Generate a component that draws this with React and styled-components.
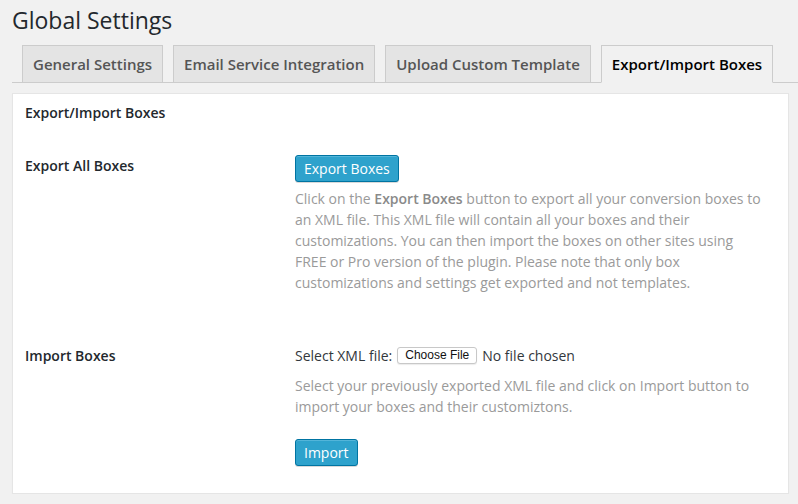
import React from 'react';
import styled, { createGlobalStyle } from 'styled-components';

const GlobalStyle = createGlobalStyle`
  body {
    margin: 0;
    background: #f1f1f1;
    font-family: "Open Sans", "Noto Sans", sans-serif;
    color: #444;
  }
`;

const Wrap = styled.div`
  padding-left: 12px;
`;

const Title = styled.h1`
  margin: 0;
  padding-top: 6px;
  font-size: 23px;
  line-height: 29px;
  font-weight: 400;
  color: #23282d;
`;

const TabBar = styled.nav`
  display: flex;
  gap: 10px;
  margin-top: 10px;
  padding-left: 10px;
  border-bottom: 1px solid #ccc;
`;

const Tab = styled.a`
  display: block;
  margin-bottom: -1px;
  padding: 6px 10px;
  font-size: 15px;
  line-height: 24px;
  font-weight: 600;
  color: ${(p) => (p.active ? '#000' : '#555')};
  background: ${(p) => (p.active ? '#f1f1f1' : '#e4e4e4')};
  border: 1px solid #ccc;
  border-bottom-color: ${(p) => (p.active ? '#f1f1f1' : '#ccc')};
  text-decoration: none;
  cursor: pointer;
`;

const Panel = styled.section`
  margin: 10px 9px 0 0;
  padding: 8px 12px 27px;
  background: #fff;
  border: 1px solid #e5e5e5;
  box-shadow: 0 1px 1px rgba(0, 0, 0, 0.04);
`;

const PanelTitle = styled.h2`
  margin: 0 0 32px;
  font-size: 14px;
  line-height: 21px;
  font-weight: 600;
  color: #23282d;
`;

const Row = styled.div`
  display: grid;
  grid-template-columns: 270px 1fr;
  margin-top: ${(p) => p.gap || 0}px;
`;

const Label = styled.div`
  font-size: 14px;
  line-height: 21px;
  font-weight: 600;
  color: #23282d;
`;

const Field = styled.div`
  display: flex;
  flex-direction: column;
  align-items: flex-start;
`;

const PrimaryButton = styled.button`
  height: 27px;
  padding: 0 8px;
  font-family: inherit;
  font-size: 14px;
  line-height: 25px;
  color: #fff;
  background: #2ea2cc;
  border: 1px solid #0074a2;
  border-radius: 3px;
  box-shadow: inset 0 1px 0 rgba(120, 200, 230, 0.5), 0 1px 0 rgba(0, 0, 0, 0.15);
  cursor: pointer;
  margin-top: ${(p) => p.top || 0}px;
`;

const Desc = styled.p`
  max-width: 469px;
  margin: ${(p) => p.top || 0}px 0 0;
  font-size: 14px;
  line-height: 21px;
  color: #9a9a9a;

  strong {
    font-weight: 600;
    color: #8a8a8a;
  }
`;

const FileLine = styled.div`
  display: flex;
  align-items: center;
  font-size: 14px;
  line-height: 21px;
  color: #32373c;
`;

const FileButton = styled.button`
  height: 17px;
  margin: 0 5px 0 5px;
  padding: 0 7px;
  font-family: "Liberation Sans", Arial, sans-serif;
  font-size: 12px;
  line-height: 15px;
  color: #111;
  background: #fff;
  border: 1px solid #c8c8c8;
  border-radius: 3px;
  box-shadow: 0 1px 1px rgba(0, 0, 0, 0.08);
  cursor: pointer;
`;

const tabs = [
  'General Settings',
  'Email Service Integration',
  'Upload Custom Template',
  'Export/Import Boxes',
];

export default function App() {
  return (
    <Wrap>
      <GlobalStyle />
      <Title>Global Settings</Title>
      <TabBar>
        {tabs.map((t, i) => (
          <Tab key={t} active={i === tabs.length - 1}>
            {t}
          </Tab>
        ))}
      </TabBar>
      <Panel>
        <PanelTitle>Export/Import Boxes</PanelTitle>
        <Row>
          <Label>Export All Boxes</Label>
          <Field>
            <PrimaryButton>Export Boxes</PrimaryButton>
            <Desc top={6}>
              Click on the <strong>Export Boxes</strong> button to export all your
              conversion boxes to an XML file. This XML file will contain all your
              boxes and their customizations. You can then import the boxes on other
              sites using FREE or Pro version of the plugin. Please note that only box
              customizations and settings get exported and not templates.
            </Desc>
          </Field>
        </Row>
        <Row gap={52}>
          <Label>Import Boxes</Label>
          <Field>
            <FileLine>
              Select XML file:
              <FileButton>Choose File</FileButton>
              No file chosen
            </FileLine>
            <Desc top={9}>
              Select your previously exported XML file and click on Import button to
              import your boxes and their customiztons.
            </Desc>
            <PrimaryButton top={22}>Import</PrimaryButton>
          </Field>
        </Row>
      </Panel>
    </Wrap>
  );
}
